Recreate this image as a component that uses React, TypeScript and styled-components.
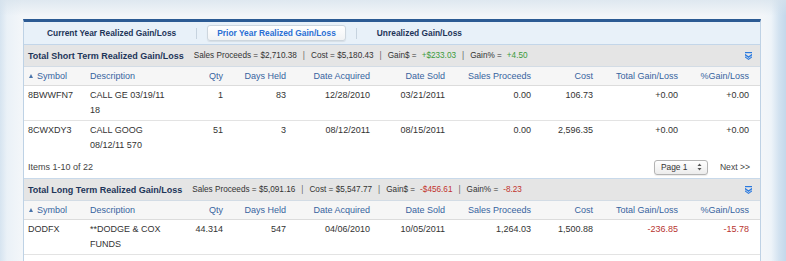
import React from "react";
import styled, { createGlobalStyle } from "styled-components";

const GlobalStyle = createGlobalStyle`
  html, body { margin: 0; padding: 0; }
  body {
    width: 786px;
    height: 261px;
    overflow: hidden;
    font-family: "Liberation Sans", Arial, sans-serif;
    background:
      linear-gradient(to bottom, rgba(214, 226, 236, 0.7) 0px, rgba(255, 255, 255, 0) 16px),
      linear-gradient(to right, #d6e4f0 0px, #eaf1f7 7px, #f3f6f9 22px, #f3f6f9 762px, #eef4f9 771px, #d2e2f0 779px, #c4d8eb 786px);
  }
`;

const Page = styled.div`
  padding: 19px 0 0 23px;
  height: 261px;
  box-sizing: border-box;
`;

const Panel = styled.div`
  width: 738px;
  height: 242px;
  box-sizing: border-box;
  background: #fff;
  border: 1px solid #bed2e5;
  border-top: 3px solid #2c5b94;
  border-bottom: none;
  overflow: hidden;
`;

const TabBar = styled.div`
  display: flex;
  align-items: center;
  height: 22px;
  padding-left: 13px;
  background: #e8f1f9;
  border-bottom: 1px solid #c3d6e9;
`;

const Tab = styled.div<{ $active?: boolean }>`
  display: flex;
  align-items: center;
  height: 14px;
  padding: 0 9px;
  font-size: 8.4px;
  font-weight: bold;
  white-space: nowrap;
  color: ${(p) => (p.$active ? "#2a6fd4" : "#1e3558")};
  border-radius: 3px;
  background: ${(p) => (p.$active ? "linear-gradient(#ffffff, #f1f3f5)" : "transparent")};
  border: 1px solid ${(p) => (p.$active ? "#cdd6de" : "transparent")};
  box-shadow: ${(p) => (p.$active ? "0 1px 1px rgba(0,0,0,0.08)" : "none")};
`;

const TabSep = styled.div`
  width: 1px;
  height: 11px;
  margin: 0 10px;
  background: #c6d3df;
`;

const SummaryBar = styled.div`
  display: flex;
  align-items: center;
  height: 21px;
  padding: 0 8px 0 4px;
  background-color: #e5e5e5;
  background-image: radial-gradient(rgba(0, 0, 0, 0.035) 0.6px, transparent 0.7px);
  background-size: 2px 2px;
  border-bottom: 1px solid #d3dce5;
`;

const SummaryTitle = styled.div`
  font-size: 9px;
  font-weight: bold;
  color: #1d3559;
  white-space: nowrap;
  margin-right: 10px;
`;

const Stats = styled.div`
  display: flex;
  align-items: center;
  font-size: 8.2px;
  color: #333;
  white-space: nowrap;
  flex: 1;
`;

const StatSep = styled.span`
  margin: 0 6px;
  color: #666;
`;

const Value = styled.span<{ $tone?: "pos" | "neg" }>`
  margin-left: 5px;
  color: ${(p) => (p.$tone === "neg" ? "#c2322c" : p.$tone === "pos" ? "#3b9a3b" : "inherit")};
`;

const ExpandIcon = styled.svg`
  display: block;
  width: 7px;
  height: 8px;
`;

const cols = "62px 94px 47px 63px 84px 75px 86px 62px 85px 78px";

const HeaderRow = styled.div`
  display: grid;
  grid-template-columns: ${cols};
  align-items: center;
  height: 18px;
  background: #f6f6f6;
  border-bottom: 1px solid #dcdcdc;
`;

const Row = styled.div<{ $last?: boolean }>`
  display: grid;
  grid-template-columns: ${cols};
  height: 35px;
  box-sizing: border-box;
  padding-top: 2px;
  border-bottom: ${(p) => (p.$last ? "none" : "1px solid #e3e3e3")};
`;

const HeadCell = styled.div<{ $right?: boolean; $lastCol?: boolean }>`
  padding: 0 ${(p) => (p.$lastCol ? "11px" : "4px")} 0 4px;
  font-size: 9px;
  color: #37649f;
  white-space: nowrap;
  text-align: ${(p) => (p.$right ? "right" : "left")};
  display: flex;
  align-items: center;
  justify-content: ${(p) => (p.$right ? "flex-end" : "flex-start")};
`;

const SortArrow = styled.span`
  display: inline-block;
  width: 0;
  height: 0;
  border-left: 2.5px solid transparent;
  border-right: 2.5px solid transparent;
  border-bottom: 4px solid #4a74ab;
  margin: 0 4px 0 1px;
`;

const Cell = styled.div<{ $right?: boolean; $lastCol?: boolean; $wrap?: boolean; $tone?: "neg" }>`
  padding: 0 ${(p) => (p.$lastCol ? "11px" : p.$wrap ? "8px" : "4px")} 0 4px;
  font-size: 9px;
  line-height: 15px;
  color: ${(p) => (p.$tone === "neg" ? "#b8342f" : "#333")};
  text-align: ${(p) => (p.$right ? "right" : "left")};
  white-space: ${(p) => (p.$wrap ? "normal" : "nowrap")};
`;

const Footer = styled.div`
  display: flex;
  align-items: center;
  height: 22px;
  padding: 0 10px 0 4px;
  border-bottom: 1px solid #c8d9ea;
`;

const ItemsText = styled.div`
  flex: 1;
  font-size: 9px;
  color: #444;
`;

const PageSelect = styled.div`
  display: flex;
  align-items: center;
  justify-content: space-between;
  width: 54px;
  height: 15px;
  box-sizing: border-box;
  padding: 0 5px 0 6px;
  border: 1px solid #b4b4b4;
  border-radius: 3px;
  background: linear-gradient(#ffffff, #ececec);
  box-shadow: 0 1px 1px rgba(0, 0, 0, 0.08);
  font-size: 8.4px;
  color: #333;
  margin-right: 12px;
`;

const NextLink = styled.div`
  font-size: 8.6px;
  color: #444;
  white-space: nowrap;
`;

type Tone = "pos" | "neg";

interface Summary {
  title: string;
  proceeds: string;
  cost: string;
  gain: string;
  pct: string;
  tone: Tone;
}

interface RowData {
  symbol: string;
  desc: string;
  qty: string;
  days: string;
  acquired: string;
  sold: string;
  proceeds: string;
  cost: string;
  gl: string;
  pct: string;
  neg?: boolean;
}

const headers = [
  { label: "Symbol", right: false },
  { label: "Description", right: false },
  { label: "Qty", right: true },
  { label: "Days Held", right: true },
  { label: "Date Acquired", right: true },
  { label: "Date Sold", right: true },
  { label: "Sales Proceeds", right: true },
  { label: "Cost", right: true },
  { label: "Total Gain/Loss", right: true },
  { label: "%Gain/Loss", right: true },
];

const Expand = () => (
  <ExpandIcon viewBox="0 0 7 8">
    <rect x="0" y="0" width="7" height="1.2" fill="#2a79df" />
    <path d="M0 1.8 L3.5 4.3 L7 1.8 L7 3.4 L3.5 5.9 L0 3.4 Z" fill="#2a79df" />
    <path d="M0 4.3 L3.5 6.8 L7 4.3 L7 5.6 L3.5 8 L0 5.6 Z" fill="#2a79df" />
  </ExpandIcon>
);

const SummaryRow = ({ s }: { s: Summary }) => (
  <SummaryBar>
    <SummaryTitle>{s.title}</SummaryTitle>
    <Stats>
      <span>Sales Proceeds = {s.proceeds}</span>
      <StatSep>|</StatSep>
      <span>Cost = {s.cost}</span>
      <StatSep>|</StatSep>
      <span>Gain$ =</span>
      <Value $tone={s.tone}>{s.gain}</Value>
      <StatSep>|</StatSep>
      <span>Gain% =</span>
      <Value $tone={s.tone}>{s.pct}</Value>
    </Stats>
    <Expand />
  </SummaryBar>
);

const Header = () => (
  <HeaderRow>
    {headers.map((h, i) => (
      <HeadCell key={h.label} $right={h.right} $lastCol={i === headers.length - 1}>
        {i === 0 && <SortArrow />}
        {h.label}
      </HeadCell>
    ))}
  </HeaderRow>
);

const DataRow = ({ r, last }: { r: RowData; last?: boolean }) => (
  <Row $last={last}>
    <Cell>{r.symbol}</Cell>
    <Cell $wrap>{r.desc}</Cell>
    <Cell $right>{r.qty}</Cell>
    <Cell $right>{r.days}</Cell>
    <Cell $right>{r.acquired}</Cell>
    <Cell $right>{r.sold}</Cell>
    <Cell $right>{r.proceeds}</Cell>
    <Cell $right>{r.cost}</Cell>
    <Cell $right $tone={r.neg ? "neg" : undefined}>{r.gl}</Cell>
    <Cell $right $lastCol $tone={r.neg ? "neg" : undefined}>{r.pct}</Cell>
  </Row>
);

const shortSummary: Summary = {
  title: "Total Short Term Realized Gain/Loss",
  proceeds: "$2,710.38",
  cost: "$5,180.43",
  gain: "+$233.03",
  pct: "+4.50",
  tone: "pos",
};

const longSummary: Summary = {
  title: "Total Long Term Realized Gain/Loss",
  proceeds: "$5,091.16",
  cost: "$5,547.77",
  gain: "-$456.61",
  pct: "-8.23",
  tone: "neg",
};

const shortRows: RowData[] = [
  { symbol: "8BWWFN7", desc: "CALL GE 03/19/11 18", qty: "1", days: "83", acquired: "12/28/2010", sold: "03/21/2011", proceeds: "0.00", cost: "106.73", gl: "+0.00", pct: "+0.00" },
  { symbol: "8CWXDY3", desc: "CALL GOOG 08/12/11 570", qty: "51", days: "3", acquired: "08/12/2011", sold: "08/15/2011", proceeds: "0.00", cost: "2,596.35", gl: "+0.00", pct: "+0.00" },
];

const longRows: RowData[] = [
  { symbol: "DODFX", desc: "**DODGE & COX FUNDS", qty: "44.314", days: "547", acquired: "04/06/2010", sold: "10/05/2011", proceeds: "1,264.03", cost: "1,500.88", gl: "-236.85", pct: "-15.78", neg: true },
];

const SelectArrows = () => (
  <svg width="5" height="8" viewBox="0 0 5 8">
    <path d="M2.5 0.5 L4.5 3 L0.5 3 Z" fill="#555" />
    <path d="M2.5 7.5 L4.5 5 L0.5 5 Z" fill="#555" />
  </svg>
);

export default function App() {
  return (
    <>
      <GlobalStyle />
      <Page>
        <Panel>
          <TabBar>
            <Tab>Current Year Realized Gain/Loss</Tab>
            <TabSep />
            <Tab $active>Prior Year Realized Gain/Loss</Tab>
            <TabSep />
            <Tab>Unrealized Gain/Loss</Tab>
          </TabBar>
          <SummaryRow s={shortSummary} />
          <Header />
          {shortRows.map((r, i) => (
            <DataRow key={r.symbol} r={r} last={i === shortRows.length - 1} />
          ))}
          <Footer>
            <ItemsText>Items 1-10 of 22</ItemsText>
            <PageSelect>
              <span>Page 1</span>
              <SelectArrows />
            </PageSelect>
            <NextLink>Next &gt;&gt;</NextLink>
          </Footer>
          <SummaryRow s={longSummary} />
          <Header />
          {longRows.map((r) => (
            <DataRow key={r.symbol} r={r} />
          ))}
        </Panel>
      </Page>
    </>
  );
}
